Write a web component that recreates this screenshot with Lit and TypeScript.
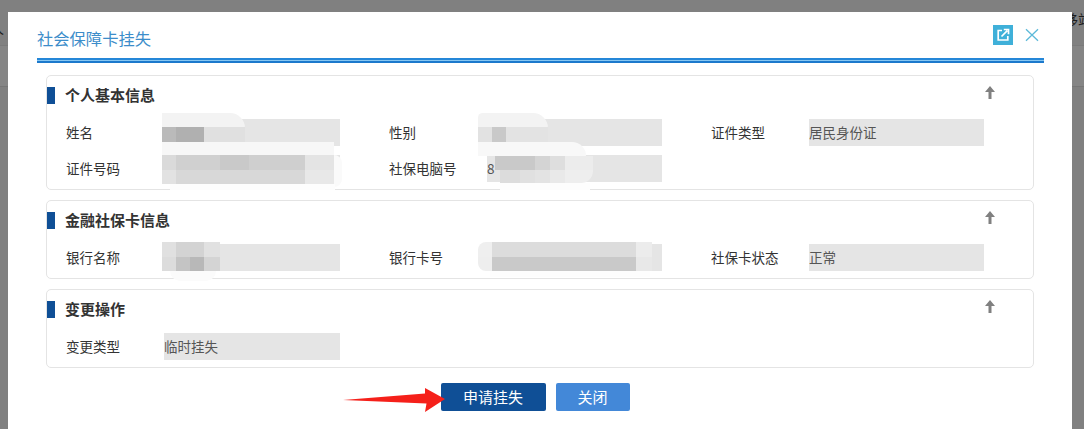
import { LitElement, html, css } from "lit";
import { customElement } from "lit/decorators.js";

type Field = { label: string; value?: string };
type Patch = [number, number, number, number, string, string?];

const PANELS: { title: string; fields: Field[] }[] = [
  {
    title: "个人基本信息",
    fields: [
      { label: "姓名" },
      { label: "性别" },
      { label: "证件类型", value: "居民身份证" },
      { label: "证件号码" },
      { label: "社保电脑号", value: "8" },
    ],
  },
  {
    title: "金融社保卡信息",
    fields: [
      { label: "银行名称" },
      { label: "银行卡号" },
      { label: "社保卡状态", value: "正常" },
    ],
  },
  { title: "变更操作", fields: [{ label: "变更类型", value: "临时挂失" }] },
];

// Masked (mosaic) regions of the screenshot, in page coordinates: x, y, w, h, colour, radius
const PATCHES: Patch[] = [
  [162, 113, 83, 15, "#f3f3f3", "0 24px 0 0"],
  [162, 127, 14, 15, "#bababa"],
  [176, 127, 28, 15, "#b0b0b0"],
  [204, 127, 41, 15, "#e0e0e0"],
  [162, 142, 172, 13, "#f7f7f7"],
  [162, 155, 14, 15, "#dadada"],
  [176, 155, 44, 15, "#d0d0d0"],
  [220, 155, 29, 15, "#c9c9c9"],
  [249, 155, 56, 15, "#cfcfcf"],
  [305, 155, 30, 15, "#e4e4e4"],
  [162, 170, 14, 14, "#e2e2e2"],
  [176, 170, 129, 14, "#d8d8d8"],
  [305, 170, 30, 14, "#e8e8e8"],
  [334, 155, 8, 32, "#fafafa", "0 8px 8px 0"],
  [170, 184, 165, 6, "#fdfdfd"],

  [478, 113, 70, 15, "#f3f3f3", "8px 26px 0 0"],
  [478, 127, 14, 15, "#e2e2e2"],
  [492, 127, 14, 15, "#c9c9c9"],
  [506, 127, 42, 15, "#e3e3e3"],
  [478, 142, 108, 14, "#f8f8f8", "0 24px 0 0"],
  [495, 156, 40, 14, "#c9c9c9"],
  [535, 156, 15, 14, "#d4d4d4"],
  [550, 156, 15, 14, "#dedede"],
  [565, 156, 28, 14, "#ececec"],
  [500, 170, 20, 13, "#dcdcdc"],
  [520, 170, 15, 13, "#e0e0e0"],
  [535, 170, 15, 13, "#e3e3e3"],
  [550, 170, 15, 13, "#e9e9e9"],
  [565, 170, 28, 13, "#eeeeee", "0 0 12px 0"],
  [500, 183, 90, 7, "#fdfdfd"],

  [162, 242, 14, 15, "#e0e0e0"],
  [176, 242, 28, 15, "#d3d3d3"],
  [204, 242, 16, 15, "#e1e1e1"],
  [162, 257, 14, 14, "#dcdcdc"],
  [176, 257, 14, 14, "#c4c4c4"],
  [190, 257, 14, 14, "#b8b8b8"],
  [204, 257, 16, 14, "#d4d4d4"],
  [170, 271, 46, 10, "#fbfbfb", "0 0 16px 16px"],

  [478, 242, 14, 15, "#efefef", "8px 0 0 0"],
  [492, 242, 144, 15, "#dcdcdc"],
  [636, 242, 16, 15, "#ececec"],
  [478, 257, 14, 14, "#eeeeee", "0 0 0 8px"],
  [492, 257, 144, 14, "#c9c9c9"],
  [636, 257, 16, 14, "#e8e8e8"],
  [490, 271, 160, 6, "#fdfdfd"],
];

@customElement("app-root")
export class AppRoot extends LitElement {
  static styles = css`
    :host {
      display: block;
      position: relative;
      height: 429px;
      overflow: hidden;
      background: #808080;
      font-family: "Noto Sans CJK SC", "Liberation Sans", sans-serif;
    }
    .page-top {
      display: flex;
      justify-content: space-between;
      height: 45px;
      box-sizing: border-box;
      padding: 10px 0 0 0;
      font-size: 14px;
      line-height: 18px;
      color: #1c1c1c;
      white-space: nowrap;
    }
    .page-top .left { margin-left: -10px; padding-top: 9px; }
    .page-top .right { margin-right: -8px; }
    .page-band {
      height: 40px;
      background: #858585;
      border-top: 1px solid #7a7a7a;
      border-bottom: 1px solid #767676;
    }
    .modal {
      position: absolute;
      left: 8px;
      top: 12px;
      width: 1064px;
      height: 417px;
      box-sizing: border-box;
      padding: 0 28px 0 29px;
      background: #fff;
      overflow: hidden;
    }
    .header {
      display: flex;
      align-items: center;
      height: 46px;
      box-sizing: border-box;
      padding: 5px 5px 0 0;
    }
    .title {
      flex: 1;
      font-size: 16.3px;
      color: #3c8dca;
    }
    .tools { display: flex; align-items: center; gap: 12px; margin-top: -6px; }
    .tools svg { display: block; }
    .rule {
      height: 1px;
      box-sizing: content-box;
      border-top: 2px solid #2587d8;
      border-bottom: 2px solid #1c79cc;
      background: #86c6f2;
    }
    .body {
      display: flex;
      flex-direction: column;
      gap: 10px;
      padding: 12px 10px 0 9px;
    }
    .panel {
      border: 1px solid #e4e4e4;
      border-radius: 5px;
      padding: 11px 0 7px;
    }
    .panel-head {
      display: flex;
      align-items: center;
      height: 17px;
      margin-bottom: 15px;
      padding-right: 38px;
    }
    .bar {
      width: 8px;
      height: 17px;
      background: #0f4f96;
      margin-right: 10px;
    }
    .panel-title {
      flex: 1;
      font-size: 15px;
      font-weight: 700;
      color: #333;
      margin-top: -2px;
    }
    .collapse { display: block; margin-top: -6px; }
    .grid {
      display: grid;
      grid-template-columns: 98px 176px 147px 175px 147px 175px;
      row-gap: 9px;
      padding-left: 19px;
    }
    .label {
      display: flex;
      align-items: center;
      height: 27px;
      box-sizing: border-box;
      padding-bottom: 2px;
      font-size: 13.5px;
      color: #333;
      white-space: nowrap;
    }
    .label.second, .label.third { margin-left: 49px; }
    .value {
      display: flex;
      align-items: center;
      height: 27px;
      box-sizing: border-box;
      padding-bottom: 2px;
      background: #e5e5e5;
      font-size: 13.5px;
      color: #555;
      white-space: nowrap;
    }
    .actions {
      display: flex;
      gap: 10px;
      margin-top: 15px;
      padding-left: 403.5px;
    }
    button {
      height: 28px;
      border: none;
      border-radius: 2px;
      padding: 0 0 2px;
      font: inherit;
      font-size: 15px;
      color: #fff;
      cursor: pointer;
    }
    .primary { width: 105px; background: #0f4f96; }
    .secondary { width: 74px; background: #4388d8; }
    .masks {
      position: absolute;
      left: 0;
      top: 0;
      width: 100%;
      height: 100%;
      pointer-events: none;
      filter: blur(0.5px);
    }
    .mask { position: absolute; }
    .arrow {
      position: absolute;
      left: 336px;
      top: 376px;
      pointer-events: none;
    }
  `;

  private fieldCols(i: number) {
    const col = i % 3;
    return col === 0 ? "" : col === 1 ? "second" : "third";
  }

  render() {
    return html`
      <div class="page-top"><span class="left">人</span><span class="right">移站</span></div>
      <div class="page-band"></div>
      <section class="modal">
        <header class="header">
          <div class="title">社会保障卡挂失</div>
          <div class="tools">
            <svg width="20" height="20" viewBox="0 0 20 20">
              <rect width="20" height="20" fill="#3fb0d9"></rect>
              <path d="M9 5.5H5.2V15h9.6v-4" fill="none" stroke="#fff" stroke-width="1.7"></path>
              <path d="M8.5 11.5 14.3 5.7M10.8 4.5h4.7v4.7" fill="none" stroke="#fff" stroke-width="1.7"></path>
            </svg>
            <svg width="14" height="14" viewBox="0 0 14 14">
              <path d="M1 1.2 13 12.8M13 1.2 1 12.8" fill="none" stroke="#5cb9d9" stroke-width="1.3"></path>
            </svg>
          </div>
        </header>
        <div class="rule"></div>
        <div class="body">
          ${PANELS.map(
            (p) => html`
              <div class="panel">
                <div class="panel-head">
                  <span class="bar"></span>
                  <span class="panel-title">${p.title}</span>
                  <svg class="collapse" width="10" height="13" viewBox="0 0 10 13">
                    <path d="M5 0 10 6H6.5V13H3.5V6H0Z" fill="#808080"></path>
                  </svg>
                </div>
                <div class="grid">
                  ${p.fields.map(
                    (f, i) => html`
                      <div class="label ${this.fieldCols(i)}">${f.label}</div>
                      <div class="value">${f.value ?? ""}</div>
                    `
                  )}
                </div>
              </div>
            `
          )}
        </div>
        <div class="actions">
          <button class="primary">申请挂失</button>
          <button class="secondary">关闭</button>
        </div>
        <div class="masks">
          ${PATCHES.map(
            ([x, y, w, h, c, r]) => html`<div
              class="mask"
              style="left:${x - 8}px;top:${y - 12}px;width:${w}px;height:${h}px;background:${c};border-radius:${r ?? "0"}"
            ></div>`
          )}
        </div>
      </section>
      <svg class="arrow" width="112" height="40" viewBox="336 376 112 40">
        <path d="M343 400 425 393.5 425 388 445 399 425 412 426.5 403.5Z" fill="#f5201a"></path>
      </svg>
    `;
  }
}
